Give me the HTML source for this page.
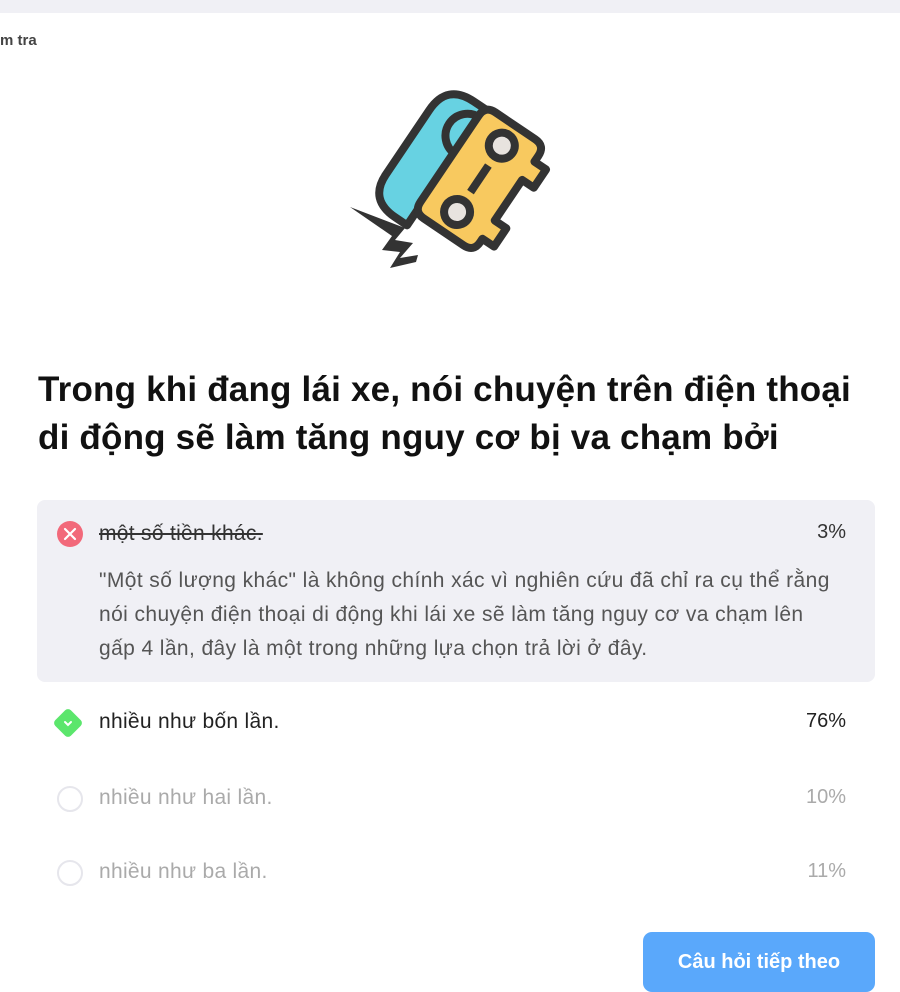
<!DOCTYPE html>
<html><head><meta charset="utf-8"><style>
body{margin:0;width:900px;height:980px;overflow:hidden;background:#fff;font-family:"Liberation Sans",sans-serif;position:relative}
.top{position:absolute;left:0;top:0;width:900px;height:13px;background:#f0f0f5}
.crumb{position:absolute;left:0;top:32px;font-size:15px;font-weight:bold;color:#444}
h1{position:absolute;left:38px;top:366px;margin:0;font-size:35px;line-height:48px;font-weight:bold;color:#111;letter-spacing:0.2px;white-space:nowrap}
.box{position:absolute;left:37px;top:500px;width:838px;height:182px;background:#f0f0f5;border-radius:8px}
.t{position:absolute;font-size:21px;letter-spacing:0.3px;white-space:nowrap}
.p{position:absolute;font-size:20px;white-space:nowrap;text-align:right;right:54px}
.exp{position:absolute;left:99px;top:564px;font-size:21px;letter-spacing:0.4px;line-height:34px;color:#555;white-space:nowrap}
.circ{position:absolute;width:22px;height:22px;border:2px solid #e6e6ec;border-radius:50%}
.btn{position:absolute;left:643px;top:932px;width:232px;height:60px;background:#5aa8fb;border-radius:9px;color:#fff;font-weight:bold;font-size:20px;text-align:center;line-height:60px}
</style></head><body>
<div class="top"></div>
<div class="crumb">m tra</div>
<svg style="position:absolute;left:0;top:0" width="900" height="300">
<polygon points="350,207 405,228 395,240 413,243 400,258 418,255 416,262 390,268 400,252 382,250 392,236" fill="#333"/>
<g transform="rotate(34 480 178)" stroke="#333" stroke-width="8" stroke-linejoin="round">
<path d="M446,118 L432,118 Q400,118 400,150 L400,228 Q400,258 432,258 L446,258 Z" fill="#67d2e2"/>
<path d="M446,128 A22,22 0 0 0 446,172" fill="#67d2e2"/>
<path d="M456,115 L504,115 Q516,115 516,127 L516,134 L530,134 L530,156 L516,156 L516,205 L530,205 L530,227 L516,227 L516,231 Q516,243 504,243 L456,243 Q444,243 444,231 L444,127 Q444,115 456,115 Z" fill="#f8c95f"/>
<circle cx="480" cy="139" r="13" fill="#e8e3df"/>
<circle cx="480" cy="219" r="13" fill="#e8e3df"/>
<line x1="480" y1="163" x2="480" y2="195"/>
</g>
</svg>
<h1>Trong khi đang lái xe, nói chuyện trên điện thoại<br>di động sẽ làm tăng nguy cơ bị va chạm bởi</h1>
<div class="box"></div>
<svg style="position:absolute;left:56px;top:520px" width="28" height="28"><circle cx="14" cy="14" r="13" fill="#f2697a"/><path d="M9,9 L19,19 M19,9 L9,19" stroke="#fff" stroke-width="2.2" stroke-linecap="round"/></svg>
<div class="t" style="left:99px;top:522px;color:#333;text-decoration:line-through">một số tiền khác.</div>
<div class="p" style="top:521px;color:#333">3%</div>
<div class="exp">"Một số lượng khác" là không chính xác vì nghiên cứu đã chỉ ra cụ thể rằng<br>nói chuyện điện thoại di động khi lái xe sẽ làm tăng nguy cơ va chạm lên<br>gấp 4 lần, đây là một trong những lựa chọn trả lời ở đây.</div>
<svg style="position:absolute;left:50px;top:705px" width="36" height="36"><rect x="7" y="7" width="22" height="22" rx="4" fill="#5be66c" transform="rotate(45 18 18)"/><path d="M15,17 L18,20 L21,17" stroke="#fff" stroke-width="2" fill="none" stroke-linecap="round"/></svg>
<div class="t" style="left:99px;top:710px;color:#222">nhiều như bốn lần.</div>
<div class="p" style="top:710px;color:#222">76%</div>
<div class="circ" style="left:57px;top:786px"></div>
<div class="t" style="left:99px;top:786px;color:#aaa">nhiều như hai lần.</div>
<div class="p" style="top:786px;color:#aaa">10%</div>
<div class="circ" style="left:57px;top:860px"></div>
<div class="t" style="left:99px;top:860px;color:#aaa">nhiều như ba lần.</div>
<div class="p" style="top:860px;color:#aaa">11%</div>
<div class="btn">Câu hỏi tiếp theo</div>
</body></html>
